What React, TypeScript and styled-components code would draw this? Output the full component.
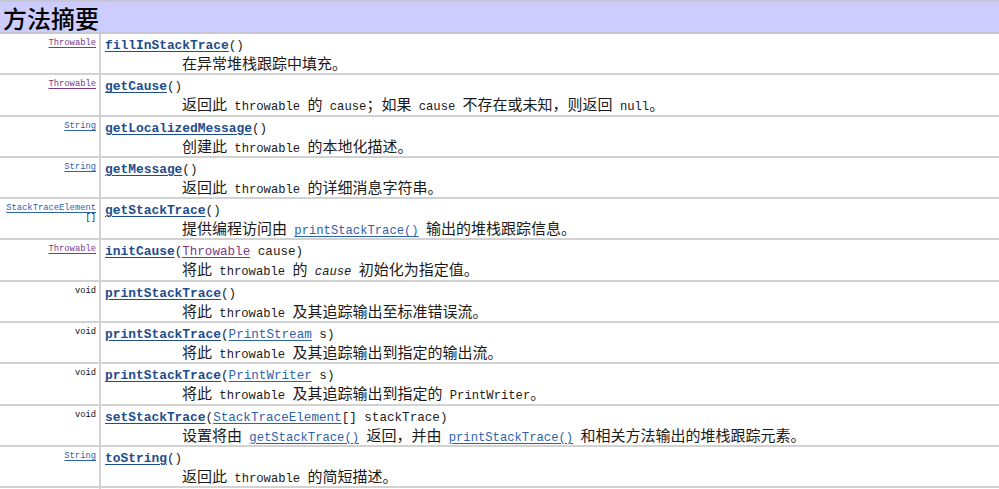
import React from "react";
import styled, { createGlobalStyle } from "styled-components";

const GlobalStyle = createGlobalStyle`
  html, body { margin: 0; padding: 0; background: #ffffff; }
  body { width: 999px; height: 489px; overflow: hidden; }
`;

const Page = styled.div`
  width: 999px;
  display: flex;
  flex-direction: column;
`;

const Header = styled.div`
  height: 30px;
  background: #ccccff;
  border-top: 2px solid #c6c6d6;
  border-bottom: 2px solid #c8c8d2;
  display: flex;
  align-items: center;
  padding-left: 3px;
  font-family: "Noto Sans CJK SC", sans-serif;
  font-weight: 500;
  font-size: 24px;
  color: #000;
`;

const Row = styled.div`
  display: grid;
  grid-template-columns: 101px 1fr;
  height: 41.3px;
  box-sizing: border-box;
  border-bottom: 2px solid #d2d2d2;
`;

const TypeCell = styled.div`
  border-right: 2px solid #d2d2d2;
  text-align: right;
  padding: 4px 3px 0 0;
  font-family: "Liberation Mono", monospace;
  font-size: 8.8px;
  line-height: 10px;
  color: #111;
`;

const Plain = styled.span`
  color: #111;
`;

const MainCell = styled.div`
  padding: 3px 0 0 4px;
  display: flex;
  flex-direction: column;
`;

const Signature = styled.div`
  font-family: "Liberation Mono", monospace;
  font-size: 12.6px;
  line-height: 17px;
  color: #222;
  white-space: pre;
`;

const MethodName = styled.a`
  font-weight: bold;
  font-size: 12.9px;
  color: #1d4d8e;
  text-decoration: underline;
  text-underline-offset: 2px;
`;

const TypeLink = styled.a<{ $visited?: boolean }>`
  color: ${(p) => (p.$visited ? "#7d3a86" : "#2f62ad")};
  text-decoration: underline;
  text-underline-offset: 2px;
`;

const Desc = styled.div`
  margin-top: -2px;
  padding-left: 77px;
  font-family: "Noto Sans CJK SC", sans-serif;
  font-size: 15px;
  line-height: 19px;
  color: #1a1a1a;
  white-space: pre;
`;

const Code = styled.span<{ $italic?: boolean }>`
  font-family: "Liberation Mono", monospace;
  font-size: 12.2px;
  font-style: ${(p) => (p.$italic ? "italic" : "normal")};
`;

const CodeLink = styled.a`
  font-family: "Liberation Mono", monospace;
  font-size: 12.2px;
  color: #2f62ad;
  text-decoration: underline;
  text-underline-offset: 2px;
`;

type Param = { type: string; visited?: boolean; suffix: string };
type Method = {
  type: string;
  typeKind: "visited" | "link" | "plain";
  typeSuffix?: string;
  name: string;
  param?: Param;
  desc: string;
};

const methods: Method[] = [
  { type: "Throwable", typeKind: "visited", name: "fillInStackTrace", desc: "在异常堆栈跟踪中填充。" },
  { type: "Throwable", typeKind: "visited", name: "getCause", desc: "返回此 throwable 的 cause；如果 cause 不存在或未知，则返回 null。" },
  { type: "String", typeKind: "link", name: "getLocalizedMessage", desc: "创建此 throwable 的本地化描述。" },
  { type: "String", typeKind: "link", name: "getMessage", desc: "返回此 throwable 的详细消息字符串。" },
  { type: "StackTraceElement", typeKind: "link", typeSuffix: "[]", name: "getStackTrace", desc: "提供编程访问由 {printStackTrace()} 输出的堆栈跟踪信息。" },
  { type: "Throwable", typeKind: "visited", name: "initCause", param: { type: "Throwable", visited: true, suffix: " cause" }, desc: "将此 throwable 的 _cause_ 初始化为指定值。" },
  { type: "void", typeKind: "plain", name: "printStackTrace", desc: "将此 throwable 及其追踪输出至标准错误流。" },
  { type: "void", typeKind: "plain", name: "printStackTrace", param: { type: "PrintStream", suffix: " s" }, desc: "将此 throwable 及其追踪输出到指定的输出流。" },
  { type: "void", typeKind: "plain", name: "printStackTrace", param: { type: "PrintWriter", suffix: " s" }, desc: "将此 throwable 及其追踪输出到指定的 PrintWriter。" },
  { type: "void", typeKind: "plain", name: "setStackTrace", param: { type: "StackTraceElement", suffix: "[] stackTrace" }, desc: "设置将由 {getStackTrace()} 返回，并由 {printStackTrace()} 和相关方法输出的堆栈跟踪元素。" },
  { type: "String", typeKind: "link", name: "toString", desc: "返回此 throwable 的简短描述。" },
];

function renderDesc(text: string) {
  const parts = text.split(/(\{[^}]+\}|_[^_]+_|[^\u0080-\uffff{}_]+)/).filter((s) => s.length > 0);
  return parts.map((p, i) => {
    if (p.startsWith("{")) return <CodeLink key={i} href="#">{p.slice(1, -1)}</CodeLink>;
    if (p.startsWith("_")) return <Code key={i} $italic>{p.slice(1, -1)}</Code>;
    if (/^[^\u0080-\uffff]+$/.test(p)) return <Code key={i}>{p}</Code>;
    return <span key={i}>{p}</span>;
  });
}

export default function App() {
  return (
    <Page>
      <GlobalStyle />
      <Header>方法摘要</Header>
      {methods.map((m, i) => (
        <Row key={i}>
          <TypeCell>
            {m.typeKind === "plain" ? (
              <Plain>{m.type}</Plain>
            ) : (
              <TypeLink href="#" $visited={m.typeKind === "visited"}>{m.type}</TypeLink>
            )}
            {m.typeSuffix && (
              <>
                <br />
                <Plain>{m.typeSuffix}</Plain>
              </>
            )}
          </TypeCell>
          <MainCell>
            <Signature>
              <MethodName href="#">{m.name}</MethodName>(
              {m.param && (
                <>
                  <TypeLink href="#" $visited={m.param.visited}>{m.param.type}</TypeLink>
                  {m.param.suffix}
                </>
              )}
              )
            </Signature>
            <Desc>{renderDesc(m.desc)}</Desc>
          </MainCell>
        </Row>
      ))}
    </Page>
  );
}
